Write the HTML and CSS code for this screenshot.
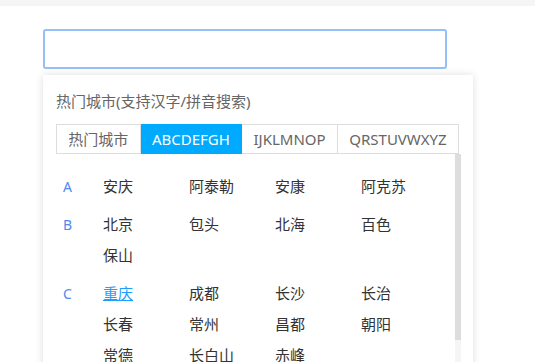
FILE: index.html
```html
<!DOCTYPE html>
<html lang="zh-CN">
  <head>
    <meta charset="UTF-8" />
    <meta name="viewport" content="width=device-width, initial-scale=1.0" />
    <title>城市选择</title>
    <link rel="stylesheet" href="styles.css">
  </head>
  <body>
    <div class="topbar"></div>
    <div class="picker">
      <input type="text" class="city_input" />

      <div class="city_popup">
        <div class="popup_title">热门城市(支持汉字/拼音搜索)</div>

        <div class="tab_bar">
          <div class="tab_item">热门城市</div>
          <div class="tab_item active">ABCDEFGH</div>
          <div class="tab_item">IJKLMNOP</div>
          <div class="tab_item">QRSTUVWXYZ</div>
        </div>

        <div class="city_list">
          <div class="list_body">
            <div class="city_group">
              <div class="group_letter">A</div>
              <div class="group_cities">
                <a class="city_item">安庆</a>
                <a class="city_item">阿泰勒</a>
                <a class="city_item">安康</a>
                <a class="city_item">阿克苏</a>
              </div>
            </div>
            <div class="city_group">
              <div class="group_letter">B</div>
              <div class="group_cities">
                <a class="city_item">北京</a>
                <a class="city_item">包头</a>
                <a class="city_item">北海</a>
                <a class="city_item">百色</a>
                <a class="city_item">保山</a>
              </div>
            </div>
            <div class="city_group">
              <div class="group_letter">C</div>
              <div class="group_cities">
                <a class="city_item hover">重庆</a>
                <a class="city_item">成都</a>
                <a class="city_item">长沙</a>
                <a class="city_item">长治</a>
                <a class="city_item">长春</a>
                <a class="city_item">常州</a>
                <a class="city_item">昌都</a>
                <a class="city_item">朝阳</a>
                <a class="city_item">常德</a>
                <a class="city_item">长白山</a>
                <a class="city_item">赤峰</a>
              </div>
            </div>
          </div>
          <div class="scroll_track">
            <div class="scroll_thumb"></div>
          </div>
        </div>
      </div>
    </div>
  </body>
</html>
```

FILE: styles.css
```css
body {
  margin: 0;
  background: #fff;
  font-family: "Noto Sans", "Noto Sans CJK SC", sans-serif;
  overflow: hidden;
}

.topbar {
  height: 6px;
  background-color: #f5f5f5;
}

.picker {
  padding: 23px 0 0 43px;
}

.city_input {
  display: block;
  box-sizing: border-box;
  width: 404px;
  height: 40px;
  margin: 0;
  border: 2px solid #94bff8;
  border-radius: 3px;
  outline: none;
  background: #fff;
}

.city_popup {
  box-sizing: border-box;
  width: 430px;
  height: 320px;
  margin-top: 6px;
  padding: 16px 12px 0 13px;
  background: #fff;
  box-shadow: 0 0 8px rgba(0, 0, 0, 0.13);
}

.popup_title {
  font-size: 15px;
  line-height: 20px;
  color: #666;
  margin-bottom: 13px;
}

.tab_bar {
  display: flex;
  width: 403px;
}

.tab_item {
  flex: 1 1 auto;
  height: 28px;
  line-height: 28px;
  padding: 0 9px;
  text-align: center;
  font-size: 15px;
  color: #666;
  border: 1px solid #ddd;
  border-left: none;
  cursor: pointer;
}

.tab_item:first-child {
  border-left: 1px solid #ddd;
}

.tab_item.active {
  background-color: #00aaff;
  border-color: #00aaff;
  color: #fff;
}

.city_list {
  display: flex;
  height: 210px;
  overflow: hidden;
}

.list_body {
  flex: 1;
  padding: 17px 0 0 7px;
}

.scroll_track {
  width: 6px;
  background: #f5f5f5;
}

.scroll_thumb {
  height: 186px;
  background: #ddd;
}

.city_group {
  display: flex;
  margin-bottom: 7px;
}

.group_letter {
  width: 40px;
  flex: none;
  font-size: 14px;
  line-height: 31px;
  color: #4d8af0;
}

.group_cities {
  display: grid;
  grid-template-columns: repeat(4, 86px);
}

.city_item {
  font-size: 15px;
  line-height: 31px;
  color: #333;
  cursor: pointer;
}

.city_item.hover {
  color: #1e9fff;
  text-decoration: underline;
}
```
